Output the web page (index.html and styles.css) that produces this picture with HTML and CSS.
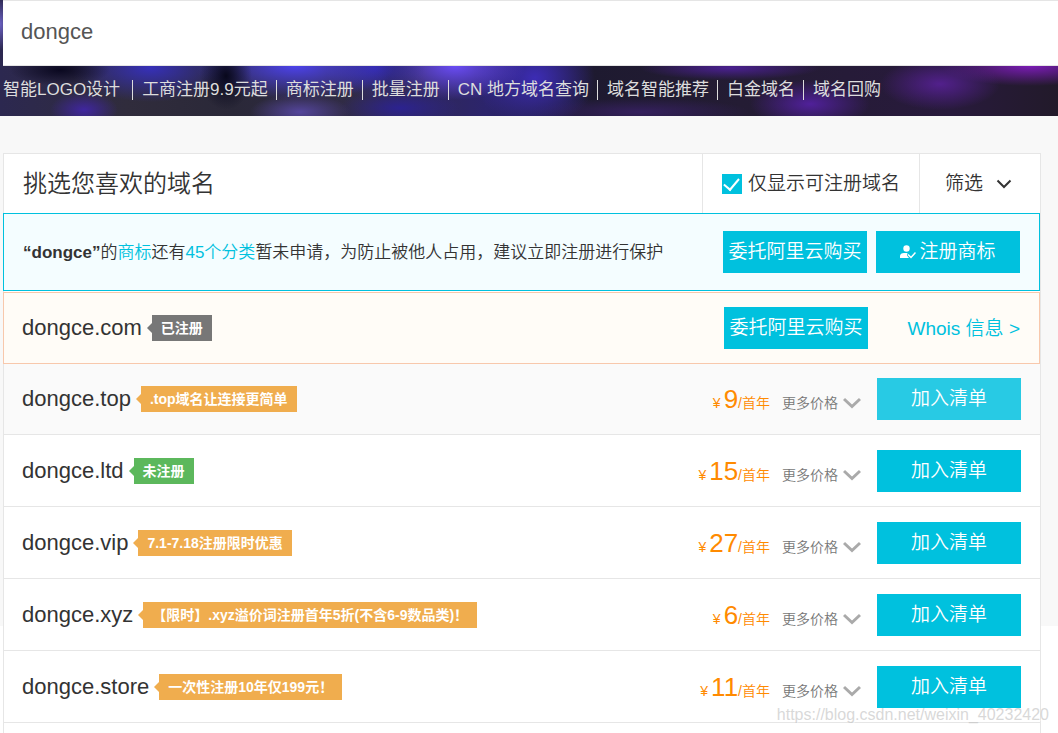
FILE: index.html
```html
<!DOCTYPE html>
<html lang="zh-CN">
<head>
<meta charset="utf-8">
<meta name="viewport" content="width=device-width, initial-scale=1">
<title>域名查询 - dongce</title>
<link rel="stylesheet" href="styles.css">
</head>
<body>
<svg class="sprite" aria-hidden="true">
  <symbol id="chevron" viewBox="0 0 18 12"><path d="M1 2l8 7.500L17 2" fill="none" stroke="currentColor" stroke-width="3"/></symbol>
</svg>

<header class="hero">
  <input class="search" type="text" value="dongce" aria-label="域名">
  <nav>
    <ul class="links">
      <li class="wide"><a href="#">智能LOGO设计</a></li>
      <li><a href="#">工商注册9.9元起</a></li>
      <li><a href="#">商标注册</a></li>
      <li><a href="#">批量注册</a></li>
      <li><a href="#">CN 地方域名查询</a></li>
      <li><a href="#">域名智能推荐</a></li>
      <li><a href="#">白金域名</a></li>
      <li><a href="#">域名回购</a></li>
    </ul>
  </nav>
</header>

<main class="panel">
  <div class="panel-head">
    <h1>挑选您喜欢的域名</h1>
    <label class="only"><input type="checkbox" checked>仅显示可注册域名</label>
    <button class="filter" type="button">筛选
      <svg viewBox="0 0 16 10" aria-hidden="true"><path d="M1.500 1.500L8 8l6.500-6.500" fill="none" stroke="currentColor" stroke-width="2"/></svg>
    </button>
  </div>

  <section class="notice">
    <p><b>“dongce”</b>的<a href="#">商标</a>还有<a href="#">45个分类</a>暂未申请，为防止被他人占用，建议立即注册进行保护</p>
    <button class="btn" type="button">委托阿里云购买</button>
    <button class="btn" type="button">
      <svg class="user" viewBox="0 0 16 14" aria-hidden="true"><circle cx="6.500" cy="3.500" r="3.200" fill="currentColor"/><path d="M0 13V11.500Q0 8 4 8H7.500L7 10.500L9 13Z" fill="currentColor"/><path d="M8 9.500l3 3 4.500-5" fill="none" stroke="currentColor" stroke-width="1.500"/></svg>注册商标</button>
  </section>

  <ul class="results">
    <li class="row taken">
      <span class="domain">dongce.com</span><span class="tag grey">已注册</span>
      <span class="side"><button class="btn" type="button">委托阿里云购买</button><a class="whois" href="#">Whois 信息 &gt;</a></span>
    </li>
    <li class="row active">
      <span class="domain">dongce.top</span><span class="tag">.top域名让连接更简单</span>
      <span class="side"><span class="price"><i>¥</i><strong>9</strong>/首年</span><button class="more" type="button">更多价格<svg><use href="#chevron"/></svg></button><button class="btn" type="button">加入清单</button></span>
    </li>
    <li class="row">
      <span class="domain">dongce.ltd</span><span class="tag green">未注册</span>
      <span class="side"><span class="price"><i>¥</i><strong>15</strong>/首年</span><button class="more" type="button">更多价格<svg><use href="#chevron"/></svg></button><button class="btn" type="button">加入清单</button></span>
    </li>
    <li class="row">
      <span class="domain">dongce.vip</span><span class="tag">7.1-7.18注册限时优惠</span>
      <span class="side"><span class="price"><i>¥</i><strong>27</strong>/首年</span><button class="more" type="button">更多价格<svg><use href="#chevron"/></svg></button><button class="btn" type="button">加入清单</button></span>
    </li>
    <li class="row">
      <span class="domain">dongce.xyz</span><span class="tag">【限时】.xyz溢价词注册首年5折(不含6-9数品类)！</span>
      <span class="side"><span class="price"><i>¥</i><strong>6</strong>/首年</span><button class="more" type="button">更多价格<svg><use href="#chevron"/></svg></button><button class="btn" type="button">加入清单</button></span>
    </li>
    <li class="row">
      <span class="domain">dongce.store</span><span class="tag">一次性注册10年仅199元！</span>
      <span class="side"><span class="price"><i>¥</i><strong>11</strong>/首年</span><button class="more" type="button">更多价格<svg><use href="#chevron"/></svg></button><button class="btn" type="button">加入清单</button></span>
    </li>
  </ul>
</main>
<div class="watermark">https://blog.csdn.net/weixin_40232420</div>
</body>
</html>
```
FILE: styles.css
```css
* { box-sizing: border-box; }

body {
  margin: 0;
  color: #333;
  background: linear-gradient(#f8f8f8, #f8f8f8) 0 0 / 100% 626px no-repeat #fff;
  font-family: "Liberation Sans", "Noto Sans CJK SC", sans-serif;
  font-size: 17px;
  font-weight: 350;
}

button, input { font: inherit; color: inherit; }
button { border: 0; padding: 0; background: none; cursor: pointer; white-space: nowrap; }
a { color: #00c1de; text-decoration: none; }
b { font-weight: 700; }
ul { list-style: none; margin: 0; padding: 0; }
.sprite { display: none; }

.hero {
  padding-left: 3px;
  background:
    radial-gradient(ellipse 12px 26px at 0 24px, #6a60c0, transparent),
    radial-gradient(ellipse 50px 16px at 60px 70px, #0a0820, transparent),
    radial-gradient(ellipse 26px 34px at 226px 76px, #08081c, transparent),
    radial-gradient(ellipse 80px 34px at 150px 68px, #3630b8, transparent),
    radial-gradient(ellipse 100px 34px at 295px 66px, #4c42ea, transparent),
    radial-gradient(ellipse 50px 30px at 375px 68px, #3028a8, transparent),
    radial-gradient(ellipse 70px 34px at 455px 66px, #6a4cf4, transparent),
    radial-gradient(ellipse 60px 50px at 535px 78px, #3c2cb4, transparent),
    radial-gradient(ellipse 50px 18px at 300px 112px, #54459c, transparent),
    radial-gradient(ellipse 34px 18px at 84px 110px, #4026a0, transparent),
    radial-gradient(ellipse 60px 20px at 400px 108px, #2c2290, transparent),
    radial-gradient(ellipse 110px 14px at 640px 112px, #35205e, transparent),
    radial-gradient(ellipse 90px 12px at 730px 68px, #4a2090, transparent),
    radial-gradient(ellipse 60px 24px at 810px 104px, #50209a, transparent),
    radial-gradient(ellipse 60px 26px at 940px 84px, #52208c, transparent),
    radial-gradient(ellipse 90px 20px at 1030px 66px, #7a1cb4, transparent),
    linear-gradient(90deg, #2c2850, #302c3c 12%, #2a2838 22%, #322c48 35%, #2c246c 46%, #1e1a30 56%, #241c34 70%, #281a3c 90%, #221a2a);
}

.search {
  display: block;
  width: 100%;
  height: 66px;
  padding: 0 18px 2px;
  border: solid #e5e5e5;
  border-width: 1px 0;
  border-radius: 0;
  outline: 0;
  background: #fff;
  color: #555;
  font-size: 22px;
}

.links { display: flex; align-items: center; gap: 8px; height: 50px; padding-bottom: 2px; font-weight: 400; }
.links li { padding-left: 9px; border-left: 1px solid #ddd; line-height: 20px; white-space: nowrap; }
.links li:first-child { padding-left: 0; border: 0; }
.links .wide { padding-right: 4px; }
.links a { color: #ddd; }

.panel {
  margin: 37px 17px 0 3px;
  padding-bottom: 10px;
  border: 1px solid #e6e6e6;
  border-bottom: 0;
  background: #fff;
}

.panel-head { display: flex; align-items: stretch; height: 59px; }
.panel-head h1 { flex: 1; margin: 0; padding-left: 19px; font-size: 24px; font-weight: 350; line-height: 60px; }
.only {
  display: flex;
  align-items: center;
  gap: 6px;
  padding: 0 19px 4px;
  border: solid #e6e6e6;
  border-width: 0 1px;
  font-size: 19px;
}
.only input {
  appearance: none;
  display: grid;
  place-items: center;
  width: 20px;
  height: 20px;
  margin: 4px 0 0;
  background: #00c1de;
}
.only input:checked::before {
  content: "";
  width: 7px;
  height: 13px;
  margin-bottom: 2px;
  border: solid #fff;
  border-width: 0 2px 2px 0;
  transform: rotate(40deg);
}
.filter { display: flex; align-items: center; gap: 13px; padding: 0 28px 4px 25px; font-size: 19px; }
.filter svg { width: 16px; height: 10px; margin-top: 4px; }

.btn { width: 144px; height: 42px; background: #00c1de; color: #fff; font-size: 19px; line-height: 28px; }
.user { width: 16px; height: 14px; margin-right: 3px; vertical-align: -1px; }

.notice {
  display: flex;
  align-items: center;
  gap: 9px;
  height: 78px;
  margin: 0 0 1px -1px;
  padding: 0 19px;
  border: 1px solid #00c1de;
  background: #f4fdff;
}
.notice p { flex: 1; margin: 0; padding-bottom: 4px; white-space: nowrap; }

.row {
  display: flex;
  align-items: center;
  height: 72px;
  padding: 0 19px 0 18px;
  border-bottom: 1px solid #e6e6e6;
}
.row.taken {
  position: relative;
  margin: 0 0 -1px -1px;
  border: 1px solid #f8c8ac;
  background: #fffcf7;
}
.row.active { background: #fafafa; }
.row.active .btn { background: #28cae4; }
.domain { font-size: 22px; }

.tag {
  position: relative;
  margin-left: 10px;
  padding: 0 9px;
  background: #f0ad4e;
  color: #fff;
  font-size: 14px;
  font-weight: 700;
  line-height: 26px;
  white-space: nowrap;
}
.tag::before {
  content: "";
  position: absolute;
  top: 8px;
  right: 100%;
  border: solid transparent;
  border-width: 5px 5px 5px 0;
  border-right-color: #f0ad4e;
}
.tag.grey { background: #777; }
.tag.grey::before { border-right-color: #777; }
.tag.green { background: #5cb85c; }
.tag.green::before { border-right-color: #5cb85c; }

.side { display: flex; align-items: center; margin-left: auto; }
.whois { width: 152px; padding-bottom: 4px; font-size: 19px; text-align: right; white-space: nowrap; }
.price { margin-top: 4px; color: #ff8a00; font-size: 14px; line-height: 30px; white-space: nowrap; }
.price i { margin-right: 3px; font-style: normal; }
.price strong { font-size: 26px; font-weight: 350; }
.more { display: flex; align-items: center; gap: 5px; margin: 6px 16px 0 12px; color: #777; font-size: 14px; }
.more svg { width: 18px; height: 12px; margin-top: 2px; color: #aaa; }

.watermark {
  position: absolute;
  right: 9px;
  top: 706px;
  color: rgba(190, 190, 190, .6);
  font-size: 16px;
  text-shadow: 1px 1px rgba(255, 255, 255, .5);
  pointer-events: none;
}
```
